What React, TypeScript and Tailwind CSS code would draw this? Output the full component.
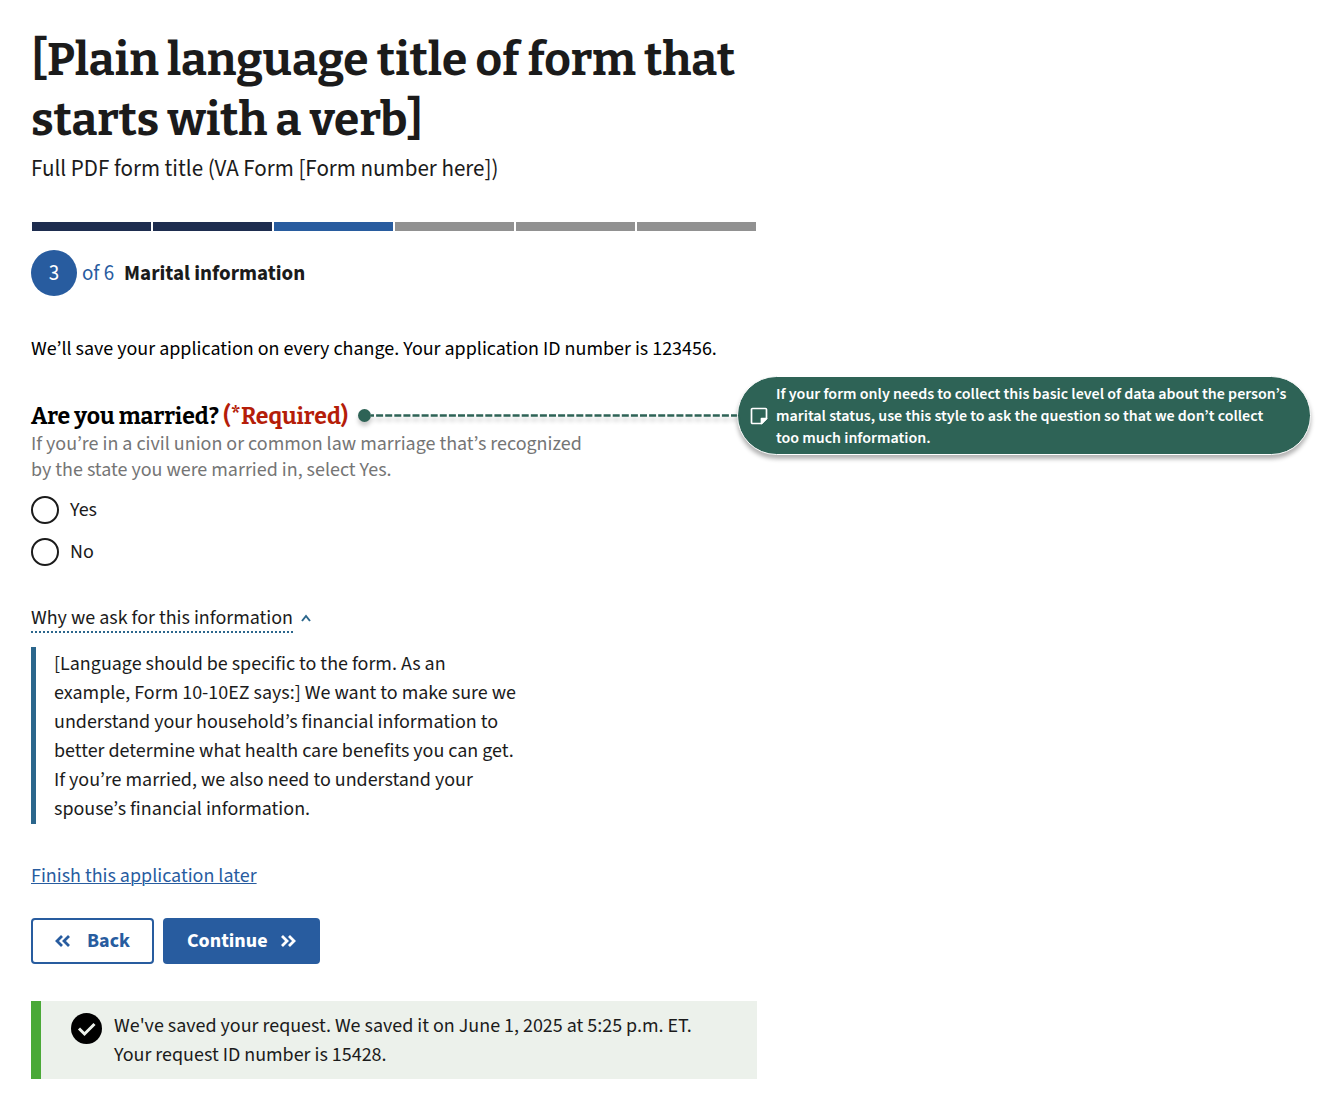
const sans = "font-['Source_Sans_Pro','Source_Sans_3','Noto_Sans_CJK_SC','Noto_Sans',sans-serif]";
const serif = "font-['Bitter','Noto_Serif','DejaVu_Serif',serif]";

const steps = [
  'bg-[#1e2d4f]',
  'bg-[#1e2d4f]',
  'bg-[#285c9f]',
  'bg-[#919191]',
  'bg-[#919191]',
  'bg-[#919191]',
];

function Chevrons({ flip = false }: { flip?: boolean }) {
  return (
    <svg
      width="16"
      height="14"
      viewBox="0 0 16 14"
      fill="none"
      stroke="currentColor"
      strokeWidth="2.8"
      className={flip ? 'rotate-180' : ''}
      aria-hidden="true"
    >
      <path d="M2 2l5 5-5 5M9 2l5 5-5 5" />
    </svg>
  );
}

function Note() {
  return (
    <aside className="flex min-w-0 flex-1 items-center">
      <div className="flex flex-1 items-center drop-shadow-[0_4px_2px_rgba(0,0,0,0.2)]">
        <span className="size-[13px] shrink-0 rounded-full bg-[#2e6356]" />
        <svg className="h-[3px] w-full min-w-0 flex-1" aria-hidden="true">
          <line x1="0" y1="1.5" x2="100%" y2="1.5" stroke="#2e6356" strokeWidth="2.4" strokeDasharray="7 2.1" strokeDashoffset="4" />
        </svg>
      </div>
      <div className="flex h-[79px] w-[574px] shrink-0 items-center gap-2 rounded-full border border-white bg-[#2e6356] pl-3 text-base/[22px] font-semibold text-white shadow-[0_4px_4px_rgba(0,0,0,0.3)]">
        <svg width="18" height="18" viewBox="0 0 18 18" fill="none" stroke="currentColor" strokeWidth="1.7" strokeLinejoin="round" className="shrink-0" aria-hidden="true">
          <path d="M2.500 1.500h13a1 1 0 0 1 1 1v9l-5 5h-9a1 1 0 0 1-1-1v-13a1 1 0 0 1 1-1z" />
          <path d="M16.500 11.500h-5v5z" fill="currentColor" />
        </svg>
        <p className="whitespace-nowrap">
          If your form only needs to collect this basic level of data about the person’s
          <br />
          marital status, use this style to ask the question so that we don’t collect
          <br />
          too much information.
        </p>
      </div>
    </aside>
  );
}

function Choice({ label }: { label: string }) {
  return (
    <label className="flex items-center gap-[11px]">
      <input type="radio" name="married" value={label} className="size-7 appearance-none rounded-full border-2 border-[#1b1b1b] bg-white checked:bg-[#285c9f]" />
      <span className="leading-7">{label}</span>
    </label>
  );
}

export default function App() {
  return (
    <main className={`${sans} pt-[30px] pr-[10px] pb-6 pl-[31px] text-[20px]/[29px] text-[#1b1b1b]`}>
      <header className="max-w-[726px]">
        <h1 className={`${serif} text-[46px]/[60px] font-bold`}>[Plain language title of form that starts with a verb]</h1>
        <p className="text-[23px]/[37px]">Full PDF form title (VA Form [Form number here])</p>
        <div className="mt-[35px] flex gap-[2px] px-px" role="progressbar" aria-valuenow={3} aria-valuemin={1} aria-valuemax={6} aria-label="Form progress">
          {steps.map((color, i) => (
            <span key={i} className={`h-[9px] flex-1 ${color}`} />
          ))}
        </div>
        <h2 className="mt-[19px] flex items-center text-[21px]/[46px]">
          <span className="size-[46px] rounded-full bg-[#285c9f] text-center text-white">3</span>
          <span className="ml-[5px] text-[#285c9f]">of 6</span>
          <span className="ml-[10px] font-bold">Marital information</span>
        </h2>
      </header>

      <p className="mt-[39px] text-black">We’ll save your application on every change. Your application ID number is 123456.</p>

      <form className="mt-3">
        <div role="radiogroup" aria-labelledby="question" aria-describedby="hint">
          <div className="flex items-center gap-[10px]">
            <h3 id="question" className={`${serif} shrink-0 text-[23px]/[36px] font-bold text-black`}>
              Are you married? <span className="text-[#b51d09]">(*Required)</span>
            </h3>
            <Note />
          </div>
          <p id="hint" className="-mt-6 max-w-[560px] leading-[26px] text-[#757575]">
            If you’re in a civil union or common law marriage that’s recognized by the state you were married in, select Yes.
          </p>
          <div className="mt-[13px] grid justify-start gap-[14px]">
            <Choice label="Yes" />
            <Choice label="No" />
          </div>
        </div>

        <button type="button" aria-expanded="true" className="mt-10 flex items-start gap-2">
          <span className="border-b-2 border-dotted border-[#2b668c] leading-[25px]">Why we ask for this information</span>
          <svg width="10" height="26" viewBox="0 0 10 26" fill="none" stroke="#2b668c" strokeWidth="2" aria-hidden="true">
            <path d="M1 15l4-5 4 5" />
          </svg>
        </button>
        <div className="mt-[14px] max-w-[489px] border-l-[5px] border-[#2b668c] pt-[3px] pl-[18px]">
          [Language should be specific to the form. As an example, Form 10-10EZ says:] We want to make sure we understand your household’s
          financial information to better determine what health care benefits you can get. If you’re married, we also need to understand
          your spouse’s financial information.
        </div>

        <a href="#later" className="mt-[38px] inline-block text-[#285c9f] underline decoration-1">
          Finish this application later
        </a>

        <div className="mt-[27px] flex gap-[9px] font-bold">
          <button type="button" className="flex h-[46px] items-center gap-4 rounded-[4px] border-2 border-[#285c9f] px-[22px] text-[#285c9f]">
            <Chevrons flip />
            Back
          </button>
          <button type="submit" className="flex h-[46px] items-center gap-3 rounded-[4px] bg-[#285c9f] px-6 text-white">
            Continue
            <Chevrons />
          </button>
        </div>
      </form>

      <div role="status" className="mt-[37px] flex max-w-[726px] gap-3 border-l-[10px] border-[#4aa937] bg-[#ecf1eb] pt-[11px] pb-[9px] pl-[30px]">
        <svg width="31" height="31" viewBox="0 0 31 31" className="mt-px shrink-0" aria-hidden="true">
          <circle cx="15.500" cy="15.500" r="15.500" fill="#000" />
          <path d="M8 15.500l5.500 5.500L23.500 11" fill="none" stroke="#ecf1eb" strokeWidth="3" />
        </svg>
        <p>
          We've saved your request. We saved it on June 1, 2025 at 5:25 p.m. ET.
          <br />
          Your request ID number is 15428.
        </p>
      </div>
    </main>
  );
}
